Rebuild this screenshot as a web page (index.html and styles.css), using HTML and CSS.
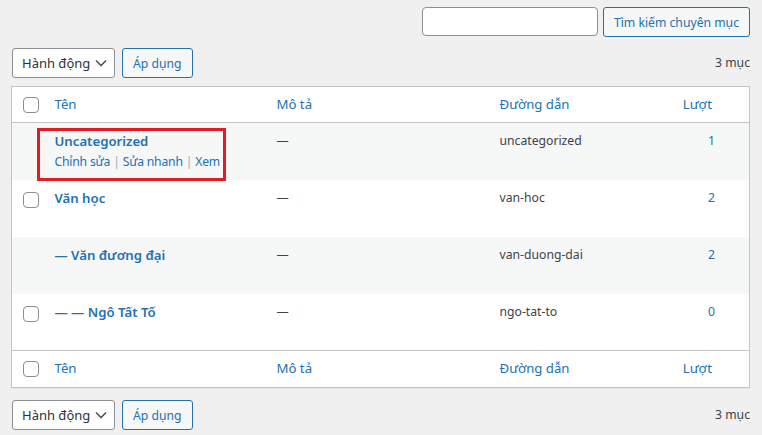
FILE: index.html
```html
<!DOCTYPE html>
<html lang="vi">
<head>
  <meta charset="UTF-8">
  <meta name="viewport" content="width=device-width, initial-scale=1.0">
  <title>Chuyên mục</title>
  <link rel="stylesheet" href="styles.css">
</head>
<body>
  <div class="wrap">
    <div class="search-box">
      <input type="search" class="search-input">
      <button class="button">Tìm kiếm chuyên mục</button>
    </div>

    <div class="tablenav top">
      <div class="bulk">
        <div class="select">Hành động
          <svg class="chev" width="12" height="8" viewBox="0 0 12 8"><path d="M1 1.5 L6 6.5 L11 1.5" fill="none" stroke="#50575e" stroke-width="1.6"/></svg>
        </div>
        <button class="button">Áp dụng</button>
      </div>
      <div class="count">3 mục</div>
    </div>

    <table class="list">
      <colgroup>
        <col class="c-check">
        <col class="c-name">
        <col class="c-desc">
        <col class="c-slug">
        <col class="c-posts">
      </colgroup>
      <thead>
        <tr>
          <th class="check"><span class="cb"></span></th>
          <th>Tên</th>
          <th>Mô tả</th>
          <th>Đường dẫn</th>
          <th class="posts">Lượt</th>
        </tr>
      </thead>
      <tbody>
        <tr class="alt">
          <td class="check"></td>
          <td class="name">
            <span class="mark"></span>
            <a class="row-title">Uncategorized</a>
            <div class="row-actions"><a>Chỉnh sửa</a> <span class="sep">|</span> <a>Sửa nhanh</a> <span class="sep">|</span> <a>Xem</a></div>
          </td>
          <td>—</td>
          <td>uncategorized</td>
          <td class="posts"><a>1</a></td>
        </tr>
        <tr>
          <td class="check"><span class="cb"></span></td>
          <td class="name"><a class="row-title">Văn học</a></td>
          <td>—</td>
          <td>van-hoc</td>
          <td class="posts"><a>2</a></td>
        </tr>
        <tr class="alt">
          <td class="check"></td>
          <td class="name"><a class="row-title">— Văn đương đại</a></td>
          <td>—</td>
          <td>van-duong-dai</td>
          <td class="posts"><a>2</a></td>
        </tr>
        <tr>
          <td class="check"><span class="cb"></span></td>
          <td class="name"><a class="row-title">— — Ngô Tất Tố</a></td>
          <td>—</td>
          <td>ngo-tat-to</td>
          <td class="posts"><a>0</a></td>
        </tr>
      </tbody>
      <tfoot>
        <tr>
          <th class="check"><span class="cb"></span></th>
          <th>Tên</th>
          <th>Mô tả</th>
          <th>Đường dẫn</th>
          <th class="posts">Lượt</th>
        </tr>
      </tfoot>
    </table>

    <div class="tablenav bottom">
      <div class="bulk">
        <div class="select">Hành động
          <svg class="chev" width="12" height="8" viewBox="0 0 12 8"><path d="M1 1.5 L6 6.5 L11 1.5" fill="none" stroke="#50575e" stroke-width="1.6"/></svg>
        </div>
        <button class="button">Áp dụng</button>
      </div>
      <div class="count">3 mục</div>
    </div>
  </div>
</body>
</html>
```

FILE: styles.css
```css
body {
  margin: 0;
  background: #f0f0f1;
  color: #3c434a;
  font-family: "Noto Sans", "Open Sans", sans-serif;
  font-size: 12.2px;
  line-height: 1.45;
}

.wrap {
  padding: 7px 12px 0 11px;
}

.search-box {
  display: flex;
  justify-content: flex-end;
  gap: 5px;
}

.search-input {
  width: 176px;
  height: 29px;
  box-sizing: border-box;
  border: 1px solid #8c8f94;
  border-radius: 4px;
  background: #fff;
  margin: 0;
}

.button {
  height: 30px;
  box-sizing: border-box;
  padding: 0 10px;
  border: 1px solid #2271b1;
  border-radius: 3px;
  background: #f6f7f7;
  color: #2271b1;
  font-family: inherit;
  font-size: 12.2px;
  cursor: pointer;
}

.tablenav {
  display: flex;
  justify-content: space-between;
  align-items: center;
  height: 30px;
  padding-left: 1px;
}

.tablenav .button,
.tablenav .select {
  height: 30px;
}

.tablenav.top {
  margin-top: 11px;
}

.tablenav.bottom {
  margin-top: 12px;
}

.bulk {
  display: flex;
  gap: 7px;
}

.select {
  width: 103px;
  box-sizing: border-box;
  display: flex;
  align-items: center;
  justify-content: space-between;
  padding: 0 7px 0 9px;
  border: 1px solid #8c8f94;
  border-radius: 3px;
  background: #fff;
  color: #2c3338;
  font-size: 13px;
  white-space: nowrap;
}

.count {
  color: #3c434a;
}

.list {
  width: 100%;
  margin-top: 8px;
  border-collapse: collapse;
  table-layout: fixed;
  background: #fff;
  border: 1px solid #c3c4c7;
  box-shadow: 0 1px 1px rgba(0, 0, 0, 0.04);
}

.c-check { width: 33px; }
.c-name { width: 222px; }
.c-desc { width: 223px; }
.c-slug { width: 165px; }

.list th {
  height: 36px;
  padding: 0 10px;
  text-align: left;
  font-weight: normal;
  font-size: 13.2px;
  color: #2271b1;
  vertical-align: middle;
}

.list thead th {
  height: 35px;
}

.list thead tr {
  border-bottom: 1px solid #c3c4c7;
}

.list tfoot tr {
  border-top: 1px solid #c3c4c7;
}

.list th.check,
.list td.check {
  padding: 0 0 0 11px;
}

.list td {
  height: 57px;
  box-sizing: border-box;
  padding: 9px 10px 0;
  vertical-align: top;
}

.list tr.alt td {
  background: #f6f7f7;
}

.list td.check {
  padding-top: 12px;
}

.cb {
  display: block;
  width: 16px;
  height: 16px;
  box-sizing: border-box;
  border: 1px solid #8c8f94;
  border-radius: 4px;
  background: #fff;
}

.list th.posts {
  text-align: right;
  padding-right: 37px;
}

.list td.posts {
  text-align: right;
  padding-right: 34px;
}

a {
  color: #2271b1;
  text-decoration: none;
}

.row-title {
  font-size: 13.2px;
  font-weight: 600;
}

.name {
  position: relative;
}

.row-actions {
  margin-top: 2px;
  color: #a7aaad;
  letter-spacing: -0.2px;
}

.mark {
  position: absolute;
  left: -8px;
  top: 5px;
  width: 189px;
  height: 53px;
  box-sizing: border-box;
  border: 3px solid #e31b23;
}
```
